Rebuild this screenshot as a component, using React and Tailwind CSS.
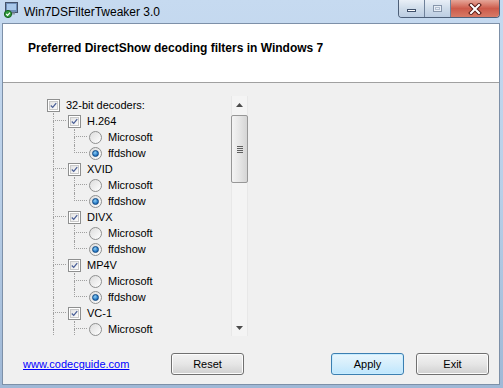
import React from 'react';

const codecs = ['H.264', 'XVID', 'DIVX', 'MP4V', 'VC-1'];

function CheckBox() {
  return (
    <div className="w-[13px] h-[13px] flex-none border border-[#8e8f8f] bg-white p-[1px]">
      <div className="w-full h-full border border-[#c9c9c9] bg-gradient-to-br from-[#e3e3e3] to-[#fbfbfb] flex items-center justify-center">
        <svg width="9" height="9" viewBox="0 0 9 9">
          <path d="M1 4.5 L3.5 7 L8 1.5" fill="none" stroke="#4a5f97" strokeWidth="1.6" />
        </svg>
      </div>
    </div>
  );
}

function Radio({ checked }) {
  return (
    <div className="w-[13px] h-[13px] flex-none rounded-full border border-[#8e8f8f] bg-gradient-to-br from-[#dcdcdc] to-[#ffffff] flex items-center justify-center">
      {checked && (
        <div className="w-[7px] h-[7px] rounded-full border border-[#0f4a86] bg-[radial-gradient(circle_at_40%_35%,#8fd0f5,#2a7cc7_60%,#16508f)]" />
      )}
    </div>
  );
}

// one indent column of the tree: pipe │, tee ├, end └
function Cell({ type }) {
  const dot = 'border-l border-dotted border-[#a0a0a0]';
  return (
    <div className="w-[21px] h-4 flex-none pl-[6px]">
      <div className={type === 'pipe' ? `h-2 w-[13px] ${dot}` : `h-2 w-[13px] ${dot} border-b`} />
      <div className={type === 'end' ? 'h-2' : `h-2 ${dot}`} />
    </div>
  );
}

function Row({ cells = [], kind, checked, label }) {
  return (
    <div className="flex items-center h-4">
      {cells.map((c, i) => (
        <Cell key={i} type={c} />
      ))}
      {kind === 'check' ? <CheckBox /> : <Radio checked={checked} />}
      <span className="ml-[6px] text-[11px] leading-4 text-black whitespace-nowrap">{label}</span>
    </div>
  );
}

function ScrollBar() {
  return (
    <div className="w-[17px] flex-none flex flex-col bg-[#f4f4f4] border-x border-[#e8e8e8]">
      <div className="h-[17px] flex items-center justify-center">
        <svg width="7" height="4" viewBox="0 0 7 4"><path d="M0 4 L3.5 0 L7 4 Z" fill="#4b4b4b" /></svg>
      </div>
      <div className="mt-[2px] h-[68px] mx-[-1px] rounded-[2px] border border-[#979797] bg-gradient-to-r from-[#f4f4f4] via-[#e6e6e6] to-[#d5d5d5] flex flex-col items-center justify-center gap-[1px]">
        <div className="w-[6px] h-[1px] bg-[#5f5f5f]" />
        <div className="w-[6px] h-[1px] bg-[#5f5f5f]" />
        <div className="w-[6px] h-[1px] bg-[#5f5f5f]" />
        <div className="w-[6px] h-[1px] bg-[#5f5f5f]" />
      </div>
      <div className="flex-1" />
      <div className="h-[17px] flex items-center justify-center">
        <svg width="7" height="4" viewBox="0 0 7 4"><path d="M0 0 L7 0 L3.5 4 Z" fill="#4b4b4b" /></svg>
      </div>
    </div>
  );
}

function AppIcon() {
  return (
    <svg width="16" height="16" viewBox="0 0 16 16">
      <rect x="2.5" y="0.5" width="12" height="10" fill="#6f8fb8" stroke="#44526a" />
      <rect x="4" y="2" width="9" height="6" fill="#a9c8ea" />
      <rect x="5" y="10.5" width="7" height="2" fill="#8c98a8" />
      <circle cx="5" cy="12" r="3.6" fill="#2f9a3a" stroke="#17621f" />
      <path d="M3.2 12 L4.6 13.4 L7 10.6" fill="none" stroke="#fff" strokeWidth="1.2" />
    </svg>
  );
}

function WinButton({ children, primary }) {
  return (
    <button
      className={
        primary
          ? 'w-[73px] h-[22px] rounded-[3px] border border-[#3c7fb1] bg-gradient-to-b from-[#e8f6fd] via-[#d5eefc] to-[#bee6fd] text-[11px] leading-none text-black shadow-[inset_0_0_0_1px_#c8ecff]'
          : 'w-[73px] h-[22px] rounded-[3px] border border-[#707070] bg-gradient-to-b from-[#f2f2f2] via-[#e6e6e6] to-[#d0d0d0] text-[11px] leading-none text-black shadow-[inset_0_0_0_1px_#fcfcfc]'
      }
    >
      {children}
    </button>
  );
}

export default function App() {
  const rows = [{ cells: [], kind: 'check', label: '32-bit decoders:' }];
  codecs.forEach((c) => {
    rows.push({ cells: ['tee'], kind: 'check', label: c });
    rows.push({ cells: ['pipe', 'tee'], kind: 'radio', label: 'Microsoft' });
    rows.push({ cells: ['pipe', 'end'], kind: 'radio', label: 'ffdshow', checked: true });
  });

  return (
    <div className="w-[503px] h-[388px] overflow-hidden flex flex-col bg-gradient-to-b from-[#c6daf0] via-[#b9cfe8] to-[#9fb8d6] font-['Liberation_Sans',Arial,sans-serif]">
      {/* title bar */}
      <div className="h-[23px] flex-none flex items-start">
        <div className="ml-[3px] mt-[2px]">
          <AppIcon />
        </div>
        <span className="ml-[5px] mt-[3px] text-[12px] text-black">Win7DSFilterTweaker 3.0</span>
        <div className="ml-auto mr-[3px] h-[18px] flex rounded-b-[4px] border border-t-0 border-[#4d5f78] overflow-hidden">
          <div className="w-[26px] bg-gradient-to-b from-[#e9eff7] via-[#cfdcea] to-[#bccde2] flex items-center justify-center border-r border-[#6f819a]">
            <div className="w-[9px] h-[3px] mt-[4px] bg-[#ffffff] border border-[#40506a]" />
          </div>
          <div className="w-[26px] bg-gradient-to-b from-[#e9eff7] via-[#cfdcea] to-[#bccde2] flex items-center justify-center border-r border-[#6f819a]">
            <div className="w-[9px] h-[7px] border border-[#8796ab] bg-[#e8eef6] p-[1px]">
              <div className="w-full h-full border border-[#b3c0d2]" />
            </div>
          </div>
          <div className="w-[48px] bg-gradient-to-b from-[#e5a699] via-[#cc5a4a] to-[#d87a66] flex items-center justify-center">
            <svg width="14" height="12" viewBox="0 0 14 12">
              <path d="M3 2 L11 10 M11 2 L3 10" stroke="#5a1c16" strokeWidth="4" strokeLinecap="square" />
              <path d="M3 2 L11 10 M11 2 L3 10" stroke="#ffffff" strokeWidth="2" strokeLinecap="square" />
            </svg>
          </div>
        </div>
      </div>

      {/* client area */}
      <div className="ml-[2px] mr-[3px] h-[362px] flex-none border border-[#7d90a8] bg-[#f0f0f0] flex flex-col">
        <div className="h-[59px] flex-none bg-white border-b border-[#a0a0a0] pl-[25px] pt-[11px]">
          <span className="text-[12px] font-bold text-black">Preferred DirectShow decoding filters in Windows 7</span>
        </div>

        <div className="mt-[13px] ml-[25px] w-[220px] h-[240px] flex overflow-hidden">
          <div className="flex-1 pl-[19px] pt-[1px] overflow-hidden">
            {rows.map((r, i) => (
              <Row key={i} {...r} />
            ))}
          </div>
          <ScrollBar />
        </div>

        <div className="mt-[17px] h-[22px] flex items-center pl-[20px]">
          <div className="w-[148px] h-[22px] flex items-center">
            <a href="#" className="text-[11px] leading-none text-[#0000ff] underline">www.codecguide.com</a>
          </div>
          <WinButton>Reset</WinButton>
          <div className="ml-[87px] flex">
            <WinButton primary>Apply</WinButton>
          </div>
          <div className="ml-[12px] flex">
            <WinButton>Exit</WinButton>
          </div>
        </div>
      </div>
    </div>
  );
}
